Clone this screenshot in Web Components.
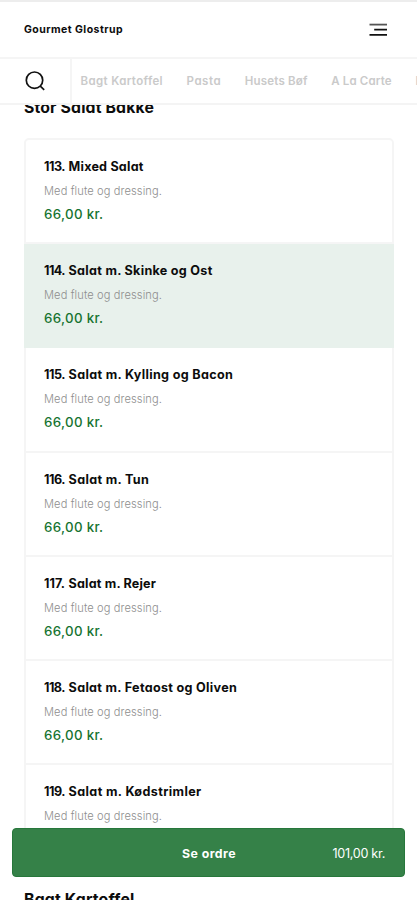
<!DOCTYPE html>
<html lang="da">
<head>
<meta charset="utf-8">
<title>Gourmet Glostrup</title>
<style>
html,body{margin:0;height:900px;overflow:hidden;background:#fff}
body{font-family:Inter,"Open Sans",sans-serif;font-feature-settings:"cv11";color:#0c0c0c}
</style>
</head>
<body>
<menu-page></menu-page>
<script>
// A single line of text whose tracking adjusts to span a given width.
class FitText extends HTMLElement {
  constructor() {
    super();
    this.attachShadow({mode: 'open'}).innerHTML =
      '<style>:host{display:block;white-space:nowrap;flex:none}span{display:inline-block}</style><span><slot></slot></span>';
  }
  connectedCallback() {
    const target = Number(this.getAttribute('width'));
    const span = this.shadowRoot.querySelector('span');
    const count = this.textContent.length;
    this.style.width = target + 'px';
    const natural = span.getBoundingClientRect().width;
    span.style.letterSpacing = (target - natural) / count + 'px';
  }
}

class TopBar extends HTMLElement {
  constructor() {
    super();
    this.attachShadow({mode: 'open'}).innerHTML = `<style>
      :host{display:flex;box-sizing:border-box;height:59px;border-top:2px solid #ededed;border-bottom:2px solid #f5f5f5;background:#fff;align-items:center;justify-content:space-between;padding:0 29px 0 24px}
      fit-text{font-size:10.5px;font-weight:700;line-height:16px}
      svg{display:block}
      </style><fit-text width="99">Gourmet Glostrup</fit-text>
      <svg width="19" height="14" viewBox="0 0 19 14" stroke="#111" stroke-width="1.8"><path d="M.5 1.6H18" stroke="#555"/><path d="M5.2 6.6H18M.5 11.8H18"/></svg>`;
  }
}

class CategoryNav extends HTMLElement {
  constructor() {
    super();
    this.attachShadow({mode: 'open'}).innerHTML = `<style>
      :host{display:flex;box-sizing:border-box;height:46px;border-bottom:2px solid #f4f4f4;background:#fff;overflow:hidden}
      .search{box-sizing:border-box;width:72px;border-right:2px solid #f5f5f5;padding:11px 0 0 24px;flex:none}
      svg{display:block}
      nav{display:flex;gap:23.6px;padding:14px 0 0 8.5px;font-size:11.5px;font-weight:600;line-height:16px;color:#cacaca}
      </style><div class="search"><svg width="22" height="22" viewBox="0 0 22 22" fill="none" stroke="#111" stroke-width="1.7"><circle cx="10.5" cy="10.2" r="8.2"/><path d="M16 15.8l4.2 4"/></svg></div>
      <nav><fit-text width="82.5">Bagt Kartoffel</fit-text><fit-text width="34.5">Pasta</fit-text><fit-text width="63">Husets Bøf</fit-text><fit-text width="60.5">A La Carte</fit-text><fit-text width="50">Burgere</fit-text></nav>`;
  }
}

class DishRow extends HTMLElement {
  constructor() {
    super();
    this.attachShadow({mode: 'open'}).innerHTML = `<style>
      :host{display:block;box-sizing:border-box;height:104.2px;border-bottom:2px solid #f5f5f5;padding:18px 18px 0}
      :host([selected]){background:#e8f1ec;border-color:#e8f1ec;margin:0 -2px;padding:18px 20px 0}
      .title{display:flex;gap:3.6px;font-size:12.6px;font-weight:700;line-height:18px}
      .desc{font-size:11.1px;font-weight:300;line-height:16px;color:#8e8e8e;margin-top:7px}
      .price{font-size:13.3px;font-weight:500;line-height:18px;color:#16732f;margin-top:6px}
      </style><div class="title"><fit-text width="21">${this.getAttribute('number')}.</fit-text><fit-text width="${this.getAttribute('width')}">${this.getAttribute('name')}</fit-text></div>
      <fit-text class="desc" width="118">Med flute og dressing.</fit-text>
      <fit-text class="price" width="59.5">66,00 kr.</fit-text>`;
  }
}

class DishCard extends HTMLElement {
  constructor() {
    super();
    this.attachShadow({mode: 'open'}).innerHTML =
      '<style>:host{display:block;border:2px solid #f5f5f5;border-radius:5px}</style><slot></slot>';
  }
}

class OrderBar extends HTMLElement {
  constructor() {
    super();
    this.attachShadow({mode: 'open'}).innerHTML = `<style>
      :host{display:grid;grid-template-columns:1fr auto 1fr;align-items:center;box-sizing:border-box;height:49px;padding:2px 19px 0 20px;background:#358148;border:1px solid #27773b;border-radius:4px;color:#fff;line-height:18px}
      .go{font-size:12.3px;font-weight:700;grid-column:2}
      .sum{font-size:12.6px;font-weight:400;justify-self:end}
      </style><fit-text class="go" width="54">Se ordre</fit-text><fit-text class="sum" width="52.5">101,00 kr.</fit-text>`;
  }
}

class MenuPage extends HTMLElement {
  constructor() {
    super();
    this.attachShadow({mode: 'open'}).innerHTML = `<style>
      :host{display:block;position:relative;height:900px;overflow:hidden;background:#fff}
      header{position:absolute;top:0;left:0;right:0;z-index:1}
      main{padding:96px 23px 0 24px}
      .h{font-size:15.8px;font-weight:650;line-height:24px}
      dish-card{margin:18px 0 16.5px}
      order-bar{position:absolute;left:12px;right:12px;top:828px}
      </style><header><top-bar></top-bar><category-nav></category-nav></header>
      <main><fit-text class="h" width="130">Stor Salat Bakke</fit-text>
      <dish-card>
        <dish-row number="113" name="Mixed Salat" width="75"></dish-row>
        <dish-row selected number="114" name="Salat m. Skinke og Ost" width="144"></dish-row>
        <dish-row number="115" name="Salat m. Kylling og Bacon" width="164.5"></dish-row>
        <dish-row number="116" name="Salat m. Tun" width="80.5"></dish-row>
        <dish-row number="117" name="Salat m. Rejer" width="87.5"></dish-row>
        <dish-row number="118" name="Salat m. Fetaost og Oliven" width="168.5"></dish-row>
        <dish-row number="119" name="Salat m. Kødstrimler" width="133"></dish-row>
      </dish-card>
      <fit-text class="h" width="110.5">Bagt Kartoffel</fit-text></main>
      <order-bar></order-bar>`;
  }
}

customElements.define('fit-text', FitText);
customElements.define('top-bar', TopBar);
customElements.define('category-nav', CategoryNav);
customElements.define('dish-row', DishRow);
customElements.define('dish-card', DishCard);
customElements.define('order-bar', OrderBar);
customElements.define('menu-page', MenuPage);
</script>
</body>
</html>
